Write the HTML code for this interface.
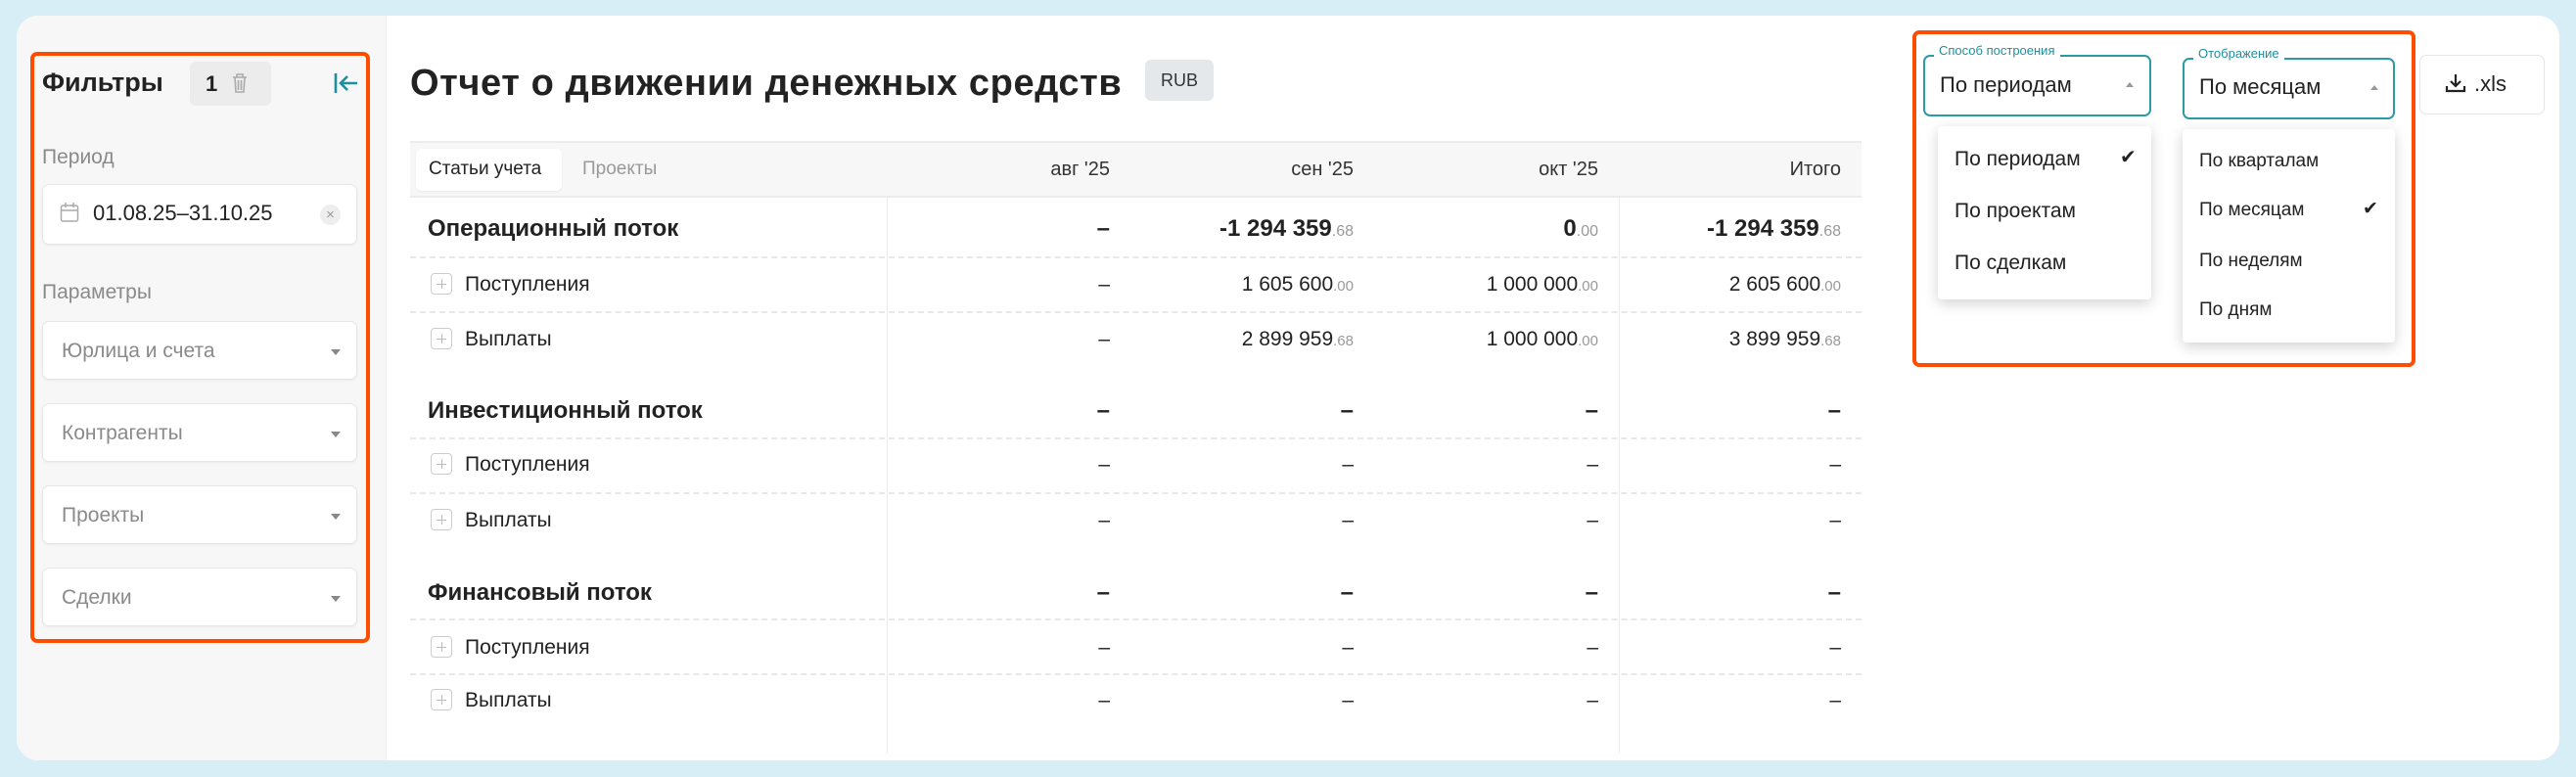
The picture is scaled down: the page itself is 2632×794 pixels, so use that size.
<!DOCTYPE html>
<html><head><meta charset="utf-8">
<style>
*{box-sizing:border-box;margin:0;padding:0}
body{width:2632px;height:794px;background:#d8eef6;font-family:"Liberation Sans",Arial,sans-serif;color:#222;position:relative;overflow:hidden}
.a{position:absolute}
.card{left:17px;top:16px;width:2598px;height:761px;background:#fff;border-radius:22px;overflow:hidden}
.side{left:17px;top:16px;width:378px;height:761px;background:#f7f7f7;border-top-left-radius:22px;border-bottom-left-radius:22px;border-right:1px solid #eee}
.ob{border:4px solid #ff4d00;border-radius:7px}
.inp{background:#fff;border:1px solid #e6e6e6;border-radius:7px;box-shadow:0 1px 2px rgba(0,0,0,.05)}
.sel{left:43px;width:322px;height:60px}
.sel span{position:absolute;left:19px;top:18px;font-size:21px;color:#8a8a8a}
.sel i{position:absolute;right:16px;top:28px;border-left:5px solid transparent;border-right:5px solid transparent;border-top:6px solid #888}
.lbl{font-size:21px;color:#8a8a8a}
.t{white-space:nowrap;line-height:1}
.r{text-align:right}
.hdr{font-size:20px;color:#333}
.num{font-size:21px;color:#222}
.num small{font-size:15px;color:#999}
.bnum{font-size:24px;font-weight:bold;color:#222}
.bnum small{font-size:16px;color:#999;font-weight:normal}
.dash{height:0;border-top:2px dashed #e8e8e8;left:419px;width:1483px}
.plus{width:22px;height:22px;border:1px solid #ccc;border-radius:4px;left:440px;background:#fff}
.plus:before{content:"";position:absolute;left:5px;top:10px;width:10px;height:1px;background:#bbb}
.plus:after{content:"";position:absolute;left:10px;top:5px;width:1px;height:10px;background:#bbb}
.sub{font-size:21px;left:475px}
.grp{font-size:24px;font-weight:bold;left:437px}
.menu{background:#fff;border-radius:4px;box-shadow:0 4px 14px rgba(0,0,0,.18)}
</style></head><body>
<div class="a card"></div>
<div class="a side"></div>
<div class="a ob" style="left:31px;top:53px;width:347px;height:604px"></div>

<div class="a t" style="left:43px;top:71px;font-size:27px;font-weight:bold">Фильтры</div>
<div class="a" style="left:194px;top:63px;width:83px;height:45px;background:#ececec;border-radius:6px"></div>
<div class="a t" style="left:210px;top:75px;font-size:22px;font-weight:bold">1</div>
<svg class="a" style="left:235px;top:73px" width="20" height="24" viewBox="0 0 20 24"><path d="M3 6h14M7 6V3h6v3M5 6l1 15h8l1-15M8.5 9v10M11.5 9v10" fill="none" stroke="#aaa" stroke-width="1.6"/></svg>
<svg class="a" style="left:340px;top:72px" width="28" height="26" viewBox="0 0 28 26"><path d="M3 3v20M25 13H9M15 6l-7 7 7 7" fill="none" stroke="#1e8f9c" stroke-width="2.6"/></svg>

<div class="a t lbl" style="left:43px;top:150px">Период</div>
<div class="a inp" style="left:43px;top:188px;width:322px;height:62px"></div>
<svg class="a" style="left:61px;top:206px" width="20" height="22" viewBox="0 0 20 22"><rect x="1.5" y="4" width="17" height="16" rx="2" fill="none" stroke="#aaa" stroke-width="1.5"/><path d="M1.5 9h17M6 1v5M14 1v5" stroke="#aaa" stroke-width="1.5"/></svg>
<div class="a t" style="left:95px;top:207px;font-size:22px">01.08.25–31.10.25</div>
<div class="a" style="left:327px;top:209px;width:21px;height:21px;border-radius:50%;background:#eee;color:#999;font-size:15px;text-align:center;line-height:21px">×</div>

<div class="a t lbl" style="left:43px;top:288px">Параметры</div>
<div class="a inp sel" style="top:328px"><span>Юрлица и счета</span><i></i></div>
<div class="a inp sel" style="top:412px"><span>Контрагенты</span><i></i></div>
<div class="a inp sel" style="top:496px"><span>Проекты</span><i></i></div>
<div class="a inp sel" style="top:580px"><span>Сделки</span><i></i></div>

<div class="a t" style="left:419px;top:66px;font-size:38px;font-weight:bold;letter-spacing:0.6px">Отчет о движении денежных средств</div>
<div class="a" style="left:1170px;top:61px;width:70px;height:42px;background:#e4e8ea;border-radius:6px;font-size:18px;text-align:center;line-height:42px;color:#333">RUB</div>

<div class="a" style="left:419px;top:144px;width:1483px;height:58px;background:#f7f7f7;border-top:2px solid #ececec;border-bottom:2px solid #ececec"></div>
<div class="a" style="left:425px;top:152px;width:149px;height:43px;background:#fff;border-radius:6px;box-shadow:0 1px 2px rgba(0,0,0,.05)"></div>
<div class="a t" style="left:438px;top:163px;font-size:19px;color:#222">Статьи учета</div>
<div class="a t" style="left:595px;top:163px;font-size:19px;color:#999">Проекты</div>
<div class="a t r hdr" style="left:934px;width:200px;top:163px">авг '25</div>
<div class="a t r hdr" style="left:1183px;width:200px;top:163px">сен '25</div>
<div class="a t r hdr" style="left:1433px;width:200px;top:163px">окт '25</div>
<div class="a t r hdr" style="left:1681px;width:200px;top:163px">Итого</div>

<div class="a" style="left:906px;top:202px;width:1px;height:568px;background:#ececec"></div>
<div class="a" style="left:1654px;top:202px;width:1px;height:568px;background:#ececec"></div>

<div class="a dash" style="top:262px"></div>
<div class="a dash" style="top:318px"></div>
<div class="a dash" style="top:447px"></div>
<div class="a dash" style="top:503px"></div>
<div class="a dash" style="top:632px"></div>
<div class="a dash" style="top:688px"></div>

<div class="a t grp" style="top:222px">Операционный поток</div>
<div class="a t r bnum" style="left:934px;width:200px;top:222px">–</div>
<div class="a t r bnum" style="left:1183px;width:200px;top:222px">-1 294 359<small>.68</small></div>
<div class="a t r bnum" style="left:1433px;width:200px;top:222px">0<small>.00</small></div>
<div class="a t r bnum" style="left:1681px;width:200px;top:222px">-1 294 359<small>.68</small></div>

<div class="a plus" style="top:279px"></div>
<div class="a t sub" style="top:280px">Поступления</div>
<div class="a t r num" style="left:934px;width:200px;top:280px">–</div>
<div class="a t r num" style="left:1183px;width:200px;top:280px">1 605 600<small>.00</small></div>
<div class="a t r num" style="left:1433px;width:200px;top:280px">1 000 000<small>.00</small></div>
<div class="a t r num" style="left:1681px;width:200px;top:280px">2 605 600<small>.00</small></div>

<div class="a plus" style="top:335px"></div>
<div class="a t sub" style="top:336px">Выплаты</div>
<div class="a t r num" style="left:934px;width:200px;top:336px">–</div>
<div class="a t r num" style="left:1183px;width:200px;top:336px">2 899 959<small>.68</small></div>
<div class="a t r num" style="left:1433px;width:200px;top:336px">1 000 000<small>.00</small></div>
<div class="a t r num" style="left:1681px;width:200px;top:336px">3 899 959<small>.68</small></div>

<div class="a t grp" style="top:408px">Инвестиционный поток</div>
<div class="a t r bnum" style="left:934px;width:200px;top:408px">–</div>
<div class="a t r bnum" style="left:1183px;width:200px;top:408px">–</div>
<div class="a t r bnum" style="left:1433px;width:200px;top:408px">–</div>
<div class="a t r bnum" style="left:1681px;width:200px;top:408px">–</div>
<div class="a plus" style="top:463px"></div>
<div class="a t sub" style="top:464px">Поступления</div>
<div class="a t r num" style="left:934px;width:200px;top:464px">–</div>
<div class="a t r num" style="left:1183px;width:200px;top:464px">–</div>
<div class="a t r num" style="left:1433px;width:200px;top:464px">–</div>
<div class="a t r num" style="left:1681px;width:200px;top:464px">–</div>
<div class="a plus" style="top:520px"></div>
<div class="a t sub" style="top:521px">Выплаты</div>
<div class="a t r num" style="left:934px;width:200px;top:521px">–</div>
<div class="a t r num" style="left:1183px;width:200px;top:521px">–</div>
<div class="a t r num" style="left:1433px;width:200px;top:521px">–</div>
<div class="a t r num" style="left:1681px;width:200px;top:521px">–</div>

<div class="a t grp" style="top:594px">Финансовый поток</div>
<div class="a t r bnum" style="left:934px;width:200px;top:594px">–</div>
<div class="a t r bnum" style="left:1183px;width:200px;top:594px">–</div>
<div class="a t r bnum" style="left:1433px;width:200px;top:594px">–</div>
<div class="a t r bnum" style="left:1681px;width:200px;top:594px">–</div>
<div class="a plus" style="top:650px"></div>
<div class="a t sub" style="top:651px">Поступления</div>
<div class="a t r num" style="left:934px;width:200px;top:651px">–</div>
<div class="a t r num" style="left:1183px;width:200px;top:651px">–</div>
<div class="a t r num" style="left:1433px;width:200px;top:651px">–</div>
<div class="a t r num" style="left:1681px;width:200px;top:651px">–</div>
<div class="a plus" style="top:704px"></div>
<div class="a t sub" style="top:705px">Выплаты</div>
<div class="a t r num" style="left:934px;width:200px;top:705px">–</div>
<div class="a t r num" style="left:1183px;width:200px;top:705px">–</div>
<div class="a t r num" style="left:1433px;width:200px;top:705px">–</div>
<div class="a t r num" style="left:1681px;width:200px;top:705px">–</div>

<div class="a ob" style="left:1954px;top:31px;width:514px;height:344px"></div>
<div class="a" style="left:1965px;top:56px;width:233px;height:63px;border:2px solid #2a9aa8;border-radius:7px"></div>
<div class="a t" style="left:1976px;top:45px;background:#fff;padding:0 5px;font-size:13px;color:#1e8f9c">Способ построения</div>
<div class="a t" style="left:1982px;top:76px;font-size:22px">По периодам</div>
<div class="a" style="left:2172px;top:84px;border-left:4px solid transparent;border-right:4px solid transparent;border-bottom:5px solid #999"></div>

<div class="a" style="left:2230px;top:59px;width:217px;height:63px;border:2px solid #2a9aa8;border-radius:7px"></div>
<div class="a t" style="left:2241px;top:48px;background:#fff;padding:0 5px;font-size:13px;color:#1e8f9c">Отображение</div>
<div class="a t" style="left:2247px;top:78px;font-size:22px">По месяцам</div>
<div class="a" style="left:2422px;top:87px;border-left:4px solid transparent;border-right:4px solid transparent;border-bottom:5px solid #999"></div>

<div class="a menu" style="left:1980px;top:129px;width:218px;height:177px"></div>
<div class="a t" style="left:1997px;top:152px;font-size:21px">По периодам</div>
<div class="a t" style="left:2166px;top:151px;font-size:20px">✔</div>
<div class="a t" style="left:1997px;top:205px;font-size:21px">По проектам</div>
<div class="a t" style="left:1997px;top:258px;font-size:21px">По сделкам</div>

<div class="a menu" style="left:2230px;top:132px;width:217px;height:218px"></div>
<div class="a t" style="left:2247px;top:155px;font-size:19px">По кварталам</div>
<div class="a t" style="left:2247px;top:205px;font-size:19px">По месяцам</div>
<div class="a t" style="left:2414px;top:204px;font-size:19px">✔</div>
<div class="a t" style="left:2247px;top:257px;font-size:19px">По неделям</div>
<div class="a t" style="left:2247px;top:307px;font-size:19px">По дням</div>

<div class="a" style="left:2472px;top:56px;width:128px;height:61px;border:1px solid #e6e6e6;border-radius:7px;background:#fff"></div>
<svg class="a" style="left:2497px;top:73px" width="24" height="24" viewBox="0 0 24 24"><path d="M12 3v12M7 10l5 5 5-5M3 15v5h18v-5" fill="none" stroke="#222" stroke-width="2.2"/></svg>
<div class="a t" style="left:2528px;top:75px;font-size:22px">.xls</div>
</body></html>
